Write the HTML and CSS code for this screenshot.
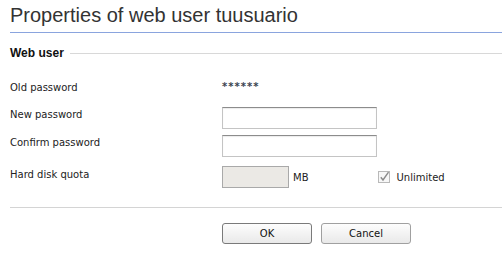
FILE: index.html
```html
<!DOCTYPE html>
<html>
<head>
<meta charset="utf-8">
<link rel="stylesheet" href="styles.css">
</head>
<body>
<div class="page">
  <h1 class="title">Properties of web user tuusuario</h1>
  <div class="legend"><span class="legend-text">Web user</span><span class="legend-line"></span></div>
  <div class="form">
    <div class="row row-static">
      <div class="label">Old password</div>
      <div class="value stars">******</div>
    </div>
    <div class="row">
      <div class="label">New password</div>
      <div class="value"><input class="field" type="password"></div>
    </div>
    <div class="row row-confirm">
      <div class="label">Confirm password</div>
      <div class="value"><input class="field" type="password"></div>
    </div>
    <div class="row row-quota">
      <div class="label">Hard disk quota</div>
      <div class="value quota">
        <input class="field small" type="text" disabled>
        <span class="unit">MB</span>
        <span class="check">
          <svg width="12" height="12" viewBox="0 0 12 12"><rect x="0.5" y="0.5" width="11" height="11" fill="#f7f7f7" stroke="#b9b9b9"/><path d="M2.8 6.2 L5 9 L10.5 1.2" fill="none" stroke="#8a8a8a" stroke-width="1.4"/></svg>
          <span class="check-label">Unlimited</span>
        </span>
      </div>
    </div>
  </div>
  <div class="divider"></div>
  <div class="buttons">
    <button class="btn btn-ok">OK</button>
    <button class="btn btn-cancel">Cancel</button>
  </div>
</div>
</body>
</html>
```
FILE: styles.css
```css
html, body {
  margin: 0;
  padding: 0;
  background: #fff;
}
.page {
  padding-left: 10px;
  font-family: "DejaVu Sans", Verdana, sans-serif;
  font-size: 10px;
  color: #222;
}
.title {
  margin: 0;
  padding-top: 3px;
  height: 29px;
  font-family: "Liberation Sans", Arial, sans-serif;
  font-weight: normal;
  font-size: 20px;
  line-height: 24px;
  color: #333;
  border-bottom: 1px solid #8aa4de;
}
.legend {
  display: flex;
  align-items: center;
  margin-top: 13px;
  height: 14px;
}
.legend-text {
  font-family: "Liberation Sans", Arial, sans-serif;
  font-weight: bold;
  font-size: 12px;
  color: #111;
  padding-right: 6px;
}
.legend-line {
  flex: 1;
  height: 1px;
  background: #d8d8d8;
  margin-top: 1px;
}
.form {
  margin-top: 19px;
}
.row {
  display: flex;
  align-items: flex-start;
  margin-bottom: 6px;
}
.row-static {
  height: 20px;
  margin-bottom: 8px;
}
.row-confirm {
  margin-bottom: 9px;
}
.label {
  width: 212px;
  padding-top: 1px;
  line-height: 13px;
}
.row-static .label {
  padding-top: 2px;
}
.row-quota .label {
  padding-top: 2px;
}
.value {
  display: flex;
  align-items: center;
}
.stars {
  padding-top: 1px;
  line-height: 13px;
  font-size: 10px;
  font-weight: bold;
  letter-spacing: 1px;
  color: #3a4250;
}
.field {
  box-sizing: border-box;
  width: 155px;
  height: 22px;
  margin: 0;
  padding: 0;
  border: 1px solid #c4c4c4;
  border-top-color: #8c8c8c;
  box-shadow: inset 0 1px 1px rgba(0,0,0,0.08);
  background: #fff;
}
.field.small {
  width: 67px;
  height: 22px;
  background: #ebe9e5;
  border: 1px solid #a9a9a9;
  box-shadow: none;
}
.unit {
  margin-left: 4px;
}
.check {
  display: flex;
  align-items: center;
  margin-left: 69px;
}
.check svg {
  display: block;
}
.check-label {
  margin-left: 7px;
}
.divider {
  margin-top: 19px;
  height: 1px;
  background: #d4d4d4;
}
.buttons {
  display: flex;
  gap: 9px;
  padding-left: 212px;
  margin-top: 15px;
}
.btn {
  box-sizing: border-box;
  width: 90px;
  height: 21px;
  margin: 0;
  padding: 0;
  font-family: "DejaVu Sans", Verdana, sans-serif;
  font-size: 10px;
  color: #111;
  border: 1px solid #7a7a7a;
  border-radius: 3px;
  background: linear-gradient(#fdfdfd, #e9e9e9);
}
.btn-cancel {
  border-color: #a0a0a0;
}
```
